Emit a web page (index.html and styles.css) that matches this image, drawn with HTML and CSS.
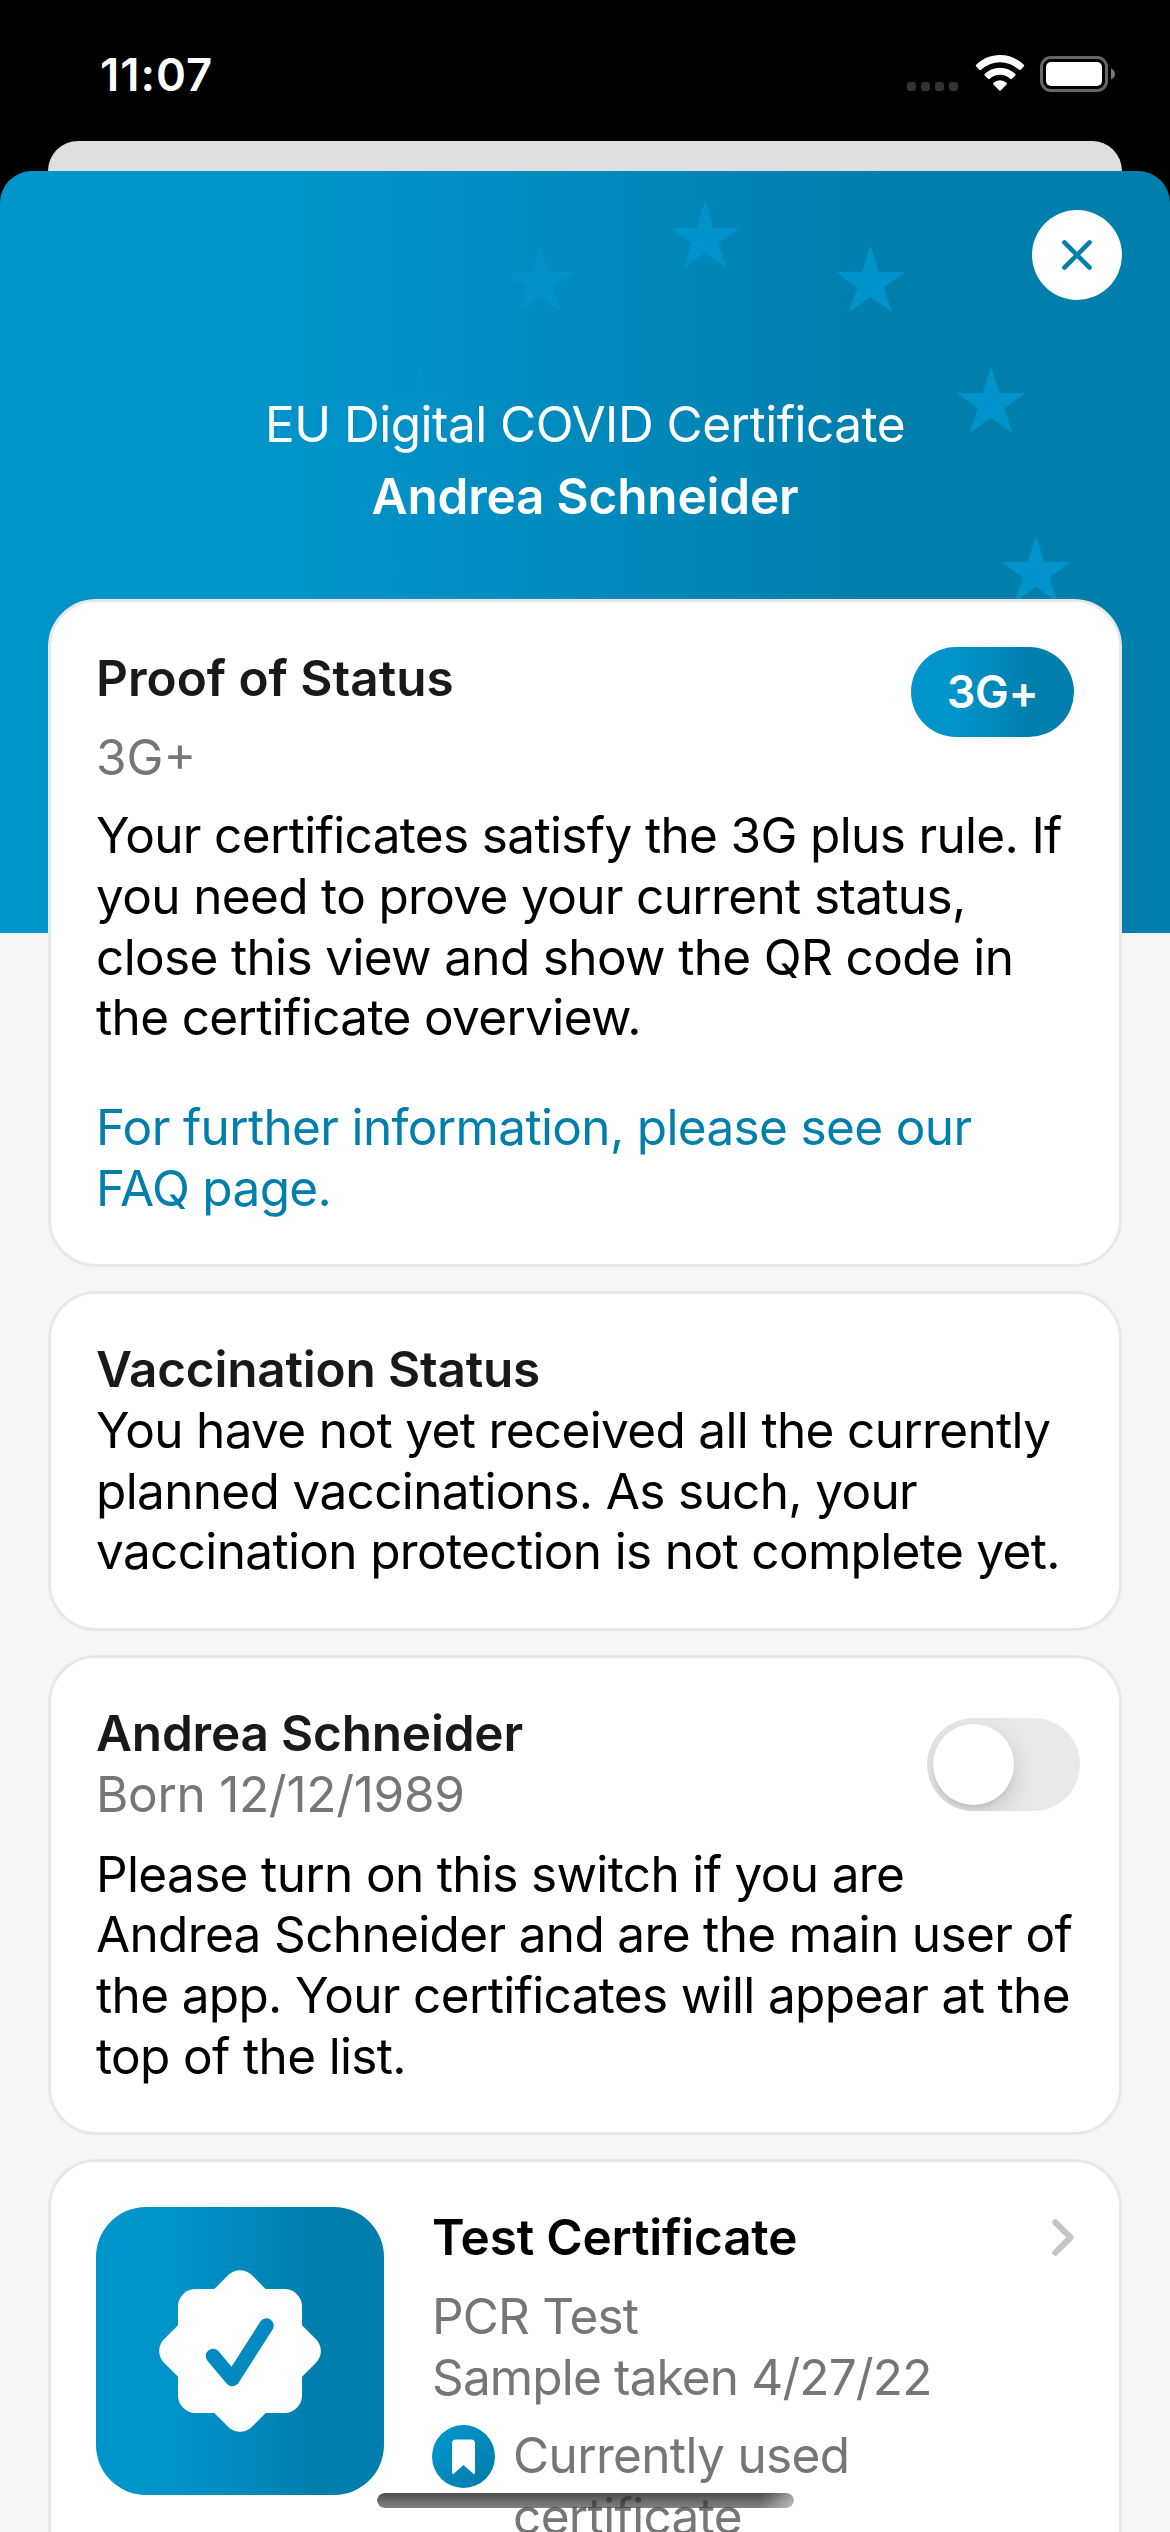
FILE: index.html
```html
<!DOCTYPE html>
<html lang="en">
<head>
<meta charset="utf-8">
<title>EU Digital COVID Certificate</title>
<link rel="stylesheet" href="styles.css">
</head>
<body>
<div class="screen">
  <div class="status-bar">
    <span class="time">11:07</span>
    <div class="status-icons">
      <div class="dots"><i></i><i></i><i></i><i></i></div>
      <svg class="wifi" width="50" height="37" viewBox="0 0 50 37">
        <path fill="#fff" d="M25 0C34.300 0 42.600 3.700 48.800 9.700Q49.700 10.600 48.800 11.500L45.700 14.700Q44.800 15.500 43.900 14.700A27.500 27.500 0 0 0 6.100 14.700Q5.200 15.500 4.300 14.700L1.200 11.500Q.3 10.600 1.200 9.700C7.400 3.700 15.700 0 25 0Z"/>
        <path fill="#fff" d="M25 12.700A22 22 0 0 1 40.200 18.800Q41.100 19.700 40.200 20.600L37 23.800Q36.100 24.600 35.200 23.800A15 15 0 0 0 14.800 23.800Q13.900 24.600 13 23.800L9.800 20.600Q8.900 19.700 9.800 18.800A22 22 0 0 1 25 12.700Z"/>
        <path fill="#fff" d="M25 25.300A9.500 9.500 0 0 1 31.500 27.800Q32.400 28.700 31.500 29.600L25.900 35.300Q25 36.200 24.100 35.300L18.500 29.600Q17.600 28.700 18.500 27.800A9.500 9.500 0 0 1 25 25.300Z"/>
      </svg>
      <svg class="battery" width="76" height="36" viewBox="0 0 76 36">
        <rect x="1.500" y="1.500" width="65" height="33" rx="9.500" fill="none" stroke="#666" stroke-width="3"/>
        <rect x="6" y="6" width="56" height="24" rx="5" fill="#fff"/>
        <path d="M71 12.500C73.500 13.500 75 15.500 75 18S73.500 22.500 71 23.500Z" fill="#777"/>
      </svg>
    </div>
  </div>
  <div class="back-sheet"></div>
  <main class="sheet">
    <svg class="stars" width="1170" height="762" viewBox="0 0 1170 762">
      <defs>
        <path id="star" d="M0-38 8.200-11H34.500L13.300 4.500 21.500 29 0 14-21.500 29-13.300 4.500-34.500-11H-8.200Z" fill="#0093cb"/>
      </defs>
      <use href="#star" x="705" y="68"/>
      <use href="#star" x="870.500" y="112"/>
      <use href="#star" x="991" y="233"/>
      <use href="#star" x="1036" y="402"/>
      <use href="#star" x="540" y="112" opacity=".75"/>
      <use href="#star" x="419" y="233" opacity=".4"/>
      <use href="#star" x="374" y="402" opacity=".25"/>
    </svg>
    <button class="close" aria-label="Close">
      <svg width="30" height="30" viewBox="0 0 30 30"><path d="M2.400 2.400 27.600 27.600M27.600 2.400 2.400 27.600" stroke="#007fad" stroke-width="4.500" stroke-linecap="round"/></svg>
    </button>
    <header class="header">
      <div class="kicker">EU Digital COVID Certificate</div>
      <h1 class="holder">Andrea Schneider</h1>
    </header>
    <section class="card proof">
      <div class="proof-head">
        <div>
          <h2 class="title proof-title">Proof of Status</h2>
          <p class="muted proof-sub">3G+</p>
        </div>
        <span class="pill">3G+</span>
      </div>
      <p class="text">Your certificates satisfy the 3G plus rule. If<br>you need to prove your current status,<br>close this view and show the QR code in<br>the certificate overview.</p>
      <a class="link">For further information, please see our<br>FAQ page.</a>
    </section>
    <section class="card vaccination">
      <h2 class="title">Vaccination Status</h2>
      <p class="text">You have not yet received all the currently<br>planned vaccinations. As such, your<br>vaccination protection is not complete yet.</p>
    </section>
    <section class="card person">
      <div class="person-head">
        <div>
          <h2 class="title">Andrea Schneider</h2>
          <p class="muted born">Born 12/12/1989</p>
        </div>
        <div class="toggle" role="switch" aria-checked="false"><span class="knob"></span></div>
      </div>
      <p class="text">Please turn on this switch if you are<br>Andrea Schneider and are the main user of<br>the app. Your certificates will appear at the<br>top of the list.</p>
    </section>
    <section class="card cert">
      <div class="cert-icon">
        <svg width="162" height="162" viewBox="-81 -81 162 162">
          <g fill="#fff">
            <rect x="-62" y="-62" width="124" height="124" rx="17.500"/>
            <rect x="-62" y="-62" width="124" height="124" rx="16.500" transform="rotate(45)"/>
          </g>
          <path d="M-27 5-7.700 28 26.500-25.500" fill="none" stroke="#008abf" stroke-width="14.500" stroke-linecap="round" stroke-linejoin="round"/>
        </svg>
      </div>
      <div class="cert-info">
        <div class="cert-head">
          <h2 class="title black">Test Certificate</h2>
          <svg width="22" height="37" viewBox="0 0 22 37"><path d="M3.300 3.300 18.600 18.500 3.300 33.700" fill="none" stroke="#c5c5c7" stroke-width="6" stroke-linecap="round" stroke-linejoin="round"/></svg>
        </div>
        <p class="muted">PCR Test<br>Sample taken 4/27/22</p>
        <div class="current">
          <svg width="63" height="63" viewBox="0 0 63 63">
            <defs><linearGradient id="dot" x1="0" y1="0" x2="1" y2="1"><stop offset=".15" stop-color="#0094cb"/><stop offset=".85" stop-color="#007fad"/></linearGradient></defs>
            <circle cx="31.500" cy="31.500" r="31.500" fill="url(#dot)"/>
            <path d="M24 14.500H39Q43 14.500 43 18.500V47.500Q43 50 41 48.500L31.500 40 22 48.500Q20 50 20 47.500V18.500Q20 14.500 24 14.500Z" fill="#fff"/>
          </svg>
          <p class="muted">Currently used<br>certificate</p>
        </div>
      </div>
    </section>
  </main>
  <div class="home-indicator"></div>
</div>
</body>
</html>
```
FILE: styles.css
```css
* { box-sizing: border-box; }
body { margin: 0; background: #000; }
h1, h2, p { margin: 0; font-weight: 400; font-size: inherit; }
.screen {
  position: relative;
  width: 1170px;
  height: 2532px;
  overflow: hidden;
  background: #000;
  font-family: Inter, "Liberation Sans", sans-serif;
  font-size: 49.5px;
  line-height: 60.8px;
  letter-spacing: -0.65px;
  color: #000;
  white-space: nowrap;
}
.status-bar {
  display: flex;
  justify-content: space-between;
  height: 141px;
  padding: 45px 54px 0 100px;
}
.time {
  color: #fff;
  font-size: 45.5px;
  font-weight: 600;
  line-height: 60px;
  letter-spacing: 1px;
}
.status-icons { display: flex; align-items: flex-start; padding-top: 11px; }
.dots { display: flex; gap: 5px; margin: 26px 17px 0 0; }
.dots i { width: 9px; height: 9px; border-radius: 3px; background: #333; }
.wifi { margin: -1px 15px 0 0; }
.back-sheet {
  height: 30px;
  margin: 0 48px;
  border-radius: 30px 30px 0 0;
  background: #e0dfe0;
}
.sheet {
  position: relative;
  display: flex;
  flex-direction: column;
  gap: 24px;
  height: 2361px;
  padding: 0 48px;
  border-radius: 32px 32px 0 0;
  background: linear-gradient(90deg, #0094cb 25%, #007fad 75%) 0 0 / 100% 762px no-repeat, #f5f5f5;
}
.stars { position: absolute; left: 0; top: 0; }
.close {
  position: absolute;
  top: 39px;
  right: 48px;
  display: flex;
  align-items: center;
  justify-content: center;
  width: 90px;
  height: 90px;
  padding: 0;
  border: 0;
  border-radius: 50%;
  background: #fff;
}
.header {
  position: relative;
  flex: none;
  height: 404px;
  padding-top: 223px;
  text-align: center;
  color: #fff;
}
.kicker { letter-spacing: -0.5px; }
.holder { margin-top: 11px; font-weight: 600; letter-spacing: -0.2px; }
.card {
  position: relative;
  flex: none;
  padding: 45px;
  border: 3px solid #e8e8e8;
  border-radius: 48px;
  background: #fff;
}
.title { font-weight: 600; letter-spacing: -0.2px; color: #17191a; }
.proof-title { padding-top: 1px; letter-spacing: 0; }
.black { color: #000; }
.muted { color: #757678; letter-spacing: -0.85px; }
.born { letter-spacing: -0.3px; }
.proof { height: 668px; }
.proof-head, .person-head { display: flex; justify-content: space-between; align-items: flex-start; }
.proof-head { height: 158px; }
.proof-sub { margin-top: 18px; letter-spacing: 0; }
.pill {
  width: 163px;
  height: 90px;
  border-radius: 45px;
  background: linear-gradient(90deg, #0094cb 25%, #007fad 75%);
  color: #fff;
  font-size: 45px;
  font-weight: 600;
  line-height: 90px;
  letter-spacing: -0.3px;
  text-align: center;
}
.link { display: block; margin-top: 49px; color: #007fad; }
.vaccination { height: 340px; }
.person { height: 480px; }
.person-head { margin-bottom: 19px; }
.toggle {
  width: 153px;
  height: 93px;
  margin: 15px -6px 0 0;
  padding: 6px;
  border-radius: 47px;
  background: #e9e9eb;
  overflow: hidden;
}
.knob {
  display: block;
  width: 81px;
  height: 81px;
  border-radius: 50%;
  background: #fff;
  box-shadow: 0 9px 24px rgba(0, 0, 0, .16), 0 3px 3px rgba(0, 0, 0, .06);
}
.cert { display: flex; gap: 48px; height: 600px; }
.cert-icon {
  display: flex;
  align-items: center;
  justify-content: center;
  width: 288px;
  height: 288px;
  border-radius: 50px;
  background: linear-gradient(90deg, #0094cb 25%, #007fad 75%);
}
.cert-info { flex: 1; }
.cert-head { display: flex; justify-content: space-between; align-items: center; margin-bottom: 18px; }
.current { display: flex; gap: 18px; margin-top: 18px; }
.current .muted { letter-spacing: -0.65px; }
.home-indicator {
  position: absolute;
  left: 377px;
  top: 2493px;
  width: 417px;
  height: 15px;
  border-radius: 8px;
  background: linear-gradient(rgba(38, 38, 38, .82), rgba(60, 60, 60, .64));
  -webkit-mask-image: linear-gradient(100deg, #000 92%, rgba(0, 0, 0, .5));
  mask-image: linear-gradient(100deg, #000 92%, rgba(0, 0, 0, .5));
}
```
